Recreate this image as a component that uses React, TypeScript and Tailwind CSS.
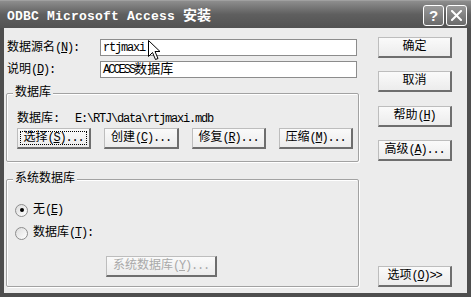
import clsx from "clsx"
import React from "react"

// latin runs: mono glyphs squeezed to 6px like the bitmap font
const L: React.FC<{ children: React.ReactNode; className?: string }> = ({ children, className }) => (
  <span className={clsx("tracking-[-1.2px]", className)}>{children}</span>
)

const Key: React.FC<{ k: string }> = ({ k }) => (
  <L>
    (<span className="underline underline-offset-[1px]">{k}</span>)
  </L>
)

const Btn: React.FC<{
  children: React.ReactNode
  className?: string
  focus?: boolean
  disabled?: boolean
}> = ({ children, className, focus, disabled }) => (
  <div
    className={clsx(
      "h-[21px] flex items-center justify-center border border-[#bdbdbd] border-r-2 border-b-2 border-r-[#6e6e6e] border-b-[#6e6e6e] bg-linear-to-b from-[#fafafa] to-[#ececec] text-[12px] leading-none",
      disabled ? "text-[#a9a9a9]" : "text-black",
      focus && "border-[#3c3c3c] p-[2px]",
      className,
    )}
  >
    {focus ? (
      <div className="w-full h-full flex items-center justify-center border border-dotted border-black">{children}</div>
    ) : (
      children
    )}
  </div>
)

const Group: React.FC<{ title: string; className?: string; children: React.ReactNode }> = ({
  title,
  className,
  children,
}) => (
  <div
    className={clsx(
      "relative border border-[#a2a2a2] rounded-[2px] shadow-[inset_1px_1px_0_#fff,1px_1px_0_#fff]",
      className,
    )}
  >
    <span className="absolute left-[6px] top-[-8px] bg-[#ececec] px-[2px] text-[12px] leading-[14px]">
      {title}
    </span>
    {children}
  </div>
)

const Radio: React.FC<{ checked?: boolean }> = ({ checked }) => (
  <span className="w-[13px] h-[13px] rounded-full border border-[#8c8c8c] bg-linear-to-br from-[#dcdcdc] to-white flex items-center justify-center">
    {checked && <span className="w-[4px] h-[4px] rounded-full bg-black" />}
  </span>
)

export default function App() {
  return (
    <div className="relative w-[471px] h-[297px] flex flex-col bg-[#4e4e4e] font-['Liberation_Mono','Noto_Sans_CJK_SC',monospace] text-black">
      {/* title bar */}
      <div className="h-[28px] flex items-center pl-[7px] pr-[4px] bg-linear-to-b from-[#8e8e8e] via-[#5f5f5f] to-[#525252] border-t border-[#a0a0a0]">
        <div className="text-white font-bold text-[13px] leading-none tracking-[0.2px] pt-[2px]">
          ODBC Microsoft Access <span className="text-[14px] tracking-normal">安装</span>
        </div>
        <div className="ml-auto flex gap-[2px] pt-[1px]">
          <div className="w-[21px] h-[21px] rounded-[3px] border border-white bg-linear-to-b from-[#9a9a9a] to-[#6a6a6a] flex items-center justify-center text-white font-bold text-[15px] leading-none font-['Liberation_Sans',sans-serif]">
            ?
          </div>
          <div className="w-[21px] h-[21px] rounded-[3px] border border-white bg-linear-to-b from-[#9a9a9a] to-[#6a6a6a] flex items-center justify-center">
            <svg width="11" height="11" viewBox="0 0 11 11">
              <path d="M1 1 L10 10 M10 1 L1 10" stroke="#fff" strokeWidth="2" strokeLinecap="square" />
            </svg>
          </div>
        </div>
      </div>

      {/* body */}
      <div className="flex-1 mx-[4px] mb-[4px] bg-[#ececec] flex">
        <div className="ml-[2px] w-[353px] flex flex-col">
          <div className="mt-[11px] h-[17px] flex items-center">
            <div className="w-[94px] pl-[1px] text-[12px] leading-none">
              数据源名<Key k="N" />
              <L>:</L>
            </div>
            <div className="w-[257px] h-[17px] border border-[#8c8c8c] bg-white flex items-center pl-[2px] text-[12px] leading-none">
              <L>rtjmaxi</L>
            </div>
          </div>
          <div className="mt-[5px] h-[17px] flex items-center">
            <div className="w-[94px] pl-[1px] text-[12px] leading-none">
              说明<Key k="D" />
              <L>:</L>
            </div>
            <div className="w-[257px] h-[17px] border border-[#8c8c8c] bg-white flex items-center pl-[2px] text-[13px] leading-none">
              <L className="text-[12px] tracking-[-2px]">ACCESS</L>数据库
            </div>
          </div>

          <Group title="数据库" className="mt-[15px] h-[69px]">
            <div className="mt-[18px] h-[14px] pl-[10px] flex items-center text-[12px] leading-none">
              <span className="w-[58px]">
                数据库<L>:</L>
              </span>
              <L>E:\RTJ\data\rtjmaxi.mdb</L>
            </div>
            <div className="mt-[2px] pl-[10px] flex gap-[13px]">
              <Btn className="w-[74px]" focus>
                选择<Key k="S" />
                <L>...</L>
              </Btn>
              <Btn className="w-[75px]">
                创建<Key k="C" />
                <L>...</L>
              </Btn>
              <Btn className="w-[74px]">
                修复<Key k="R" />
                <L>...</L>
              </Btn>
              <Btn className="w-[74px]">
                压缩<Key k="M" />
                <L>...</L>
              </Btn>
            </div>
          </Group>

          <Group title="系统数据库" className="mt-[17px] h-[108px]">
            <div className="mt-[23px] h-[14px] pl-[8px] flex items-center gap-[5px] text-[12px] leading-none">
              <Radio checked />
              <span>
                无<Key k="E" />
              </span>
            </div>
            <div className="mt-[9px] h-[14px] pl-[8px] flex items-center gap-[5px] text-[12px] leading-none">
              <Radio />
              <span>
                数据库<Key k="T" />
                <L>:</L>
              </span>
            </div>
            <div className="mt-[16px] pl-[99px]">
              <Btn className="w-[111px]" disabled>
                系统数据库<Key k="Y" />
                <L>...</L>
              </Btn>
            </div>
          </Group>
        </div>

        <div className="ml-[19px] w-[74px] flex flex-col">
          <Btn className="mt-[9px]">确定</Btn>
          <Btn className="mt-[13px]">取消</Btn>
          <Btn className="mt-[14px]">
            帮助<Key k="H" />
          </Btn>
          <Btn className="mt-[13px]">
            高级<Key k="A" />
            <L>...</L>
          </Btn>
          <Btn className="mt-auto mb-[6px]">
            选项<Key k="O" />
            <L>&gt;&gt;</L>
          </Btn>
        </div>
      </div>

      {/* mouse pointer over the first field */}
      <svg className="absolute left-[148px] top-[40px]" width="13" height="21" viewBox="0 0 13 21">
        <path
          d="M0.5 0.5 L0.5 16.5 L4.5 12.5 L7.5 19.5 L10 18.5 L7 11.5 L12 11.5 Z"
          fill="#fff"
          stroke="#000"
          strokeWidth="1"
          strokeLinejoin="miter"
        />
      </svg>
    </div>
  )
}
